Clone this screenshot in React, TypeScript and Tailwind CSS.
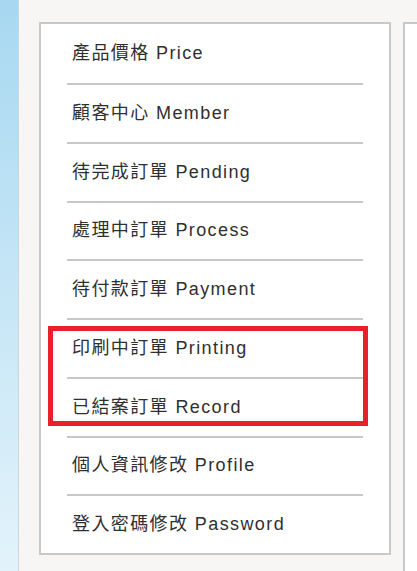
import React from "react";

const menuItems = [
  { zh: "產品價格", en: "Price" },
  { zh: "顧客中心", en: "Member" },
  { zh: "待完成訂單", en: "Pending" },
  { zh: "處理中訂單", en: "Process" },
  { zh: "待付款訂單", en: "Payment" },
  { zh: "印刷中訂單", en: "Printing" },
  { zh: "已結案訂單", en: "Record" },
  { zh: "個人資訊修改", en: "Profile" },
  { zh: "登入密碼修改", en: "Password" },
];

const rowClass = (i: number) => {
  if (i === 0) return "h-[61px] border-b-2 border-[#c8c8c8]";
  if (i === menuItems.length - 1) return "h-[56.75px]";
  return "h-[58.75px] border-b-2 border-[#c8c8c8]";
};

const App = () => {
  return (
    <div
      className="flex h-[571px] w-[417px] overflow-hidden bg-[#f7f6f4]"
      style={{ fontFamily: '"Liberation Sans", "Noto Sans CJK TC", sans-serif' }}
    >
      <div className="w-[19px] shrink-0 border-r border-[#cfd4d6] bg-gradient-to-b from-[#a7d8f1] to-[#e3f3fb]" />
      <div className="flex flex-1 gap-[12px] pl-[20px] pt-[22px]">
        <div className="relative h-[533px] w-[352px] shrink-0 border-2 border-[#c8c8c8] bg-white">
          <ul className="px-[26px]">
            {menuItems.map((item, i) => (
              <li
                key={item.en}
                className={`flex items-center pl-[5px] text-[18px] tracking-[1.4px] text-[#2f2f2f] ${rowClass(i)}`}
              >
                {item.zh} {item.en}
              </li>
            ))}
          </ul>
          {/* highlight around Printing / Record */}
          <div className="pointer-events-none absolute left-[7px] top-[302px] h-[100px] w-[320px] border-[5px] border-[#e8202a]" />
        </div>
        <div className="flex-1 border-l-2 border-t-2 border-[#c8c8c8] bg-white" />
      </div>
    </div>
  );
};

export default App;
